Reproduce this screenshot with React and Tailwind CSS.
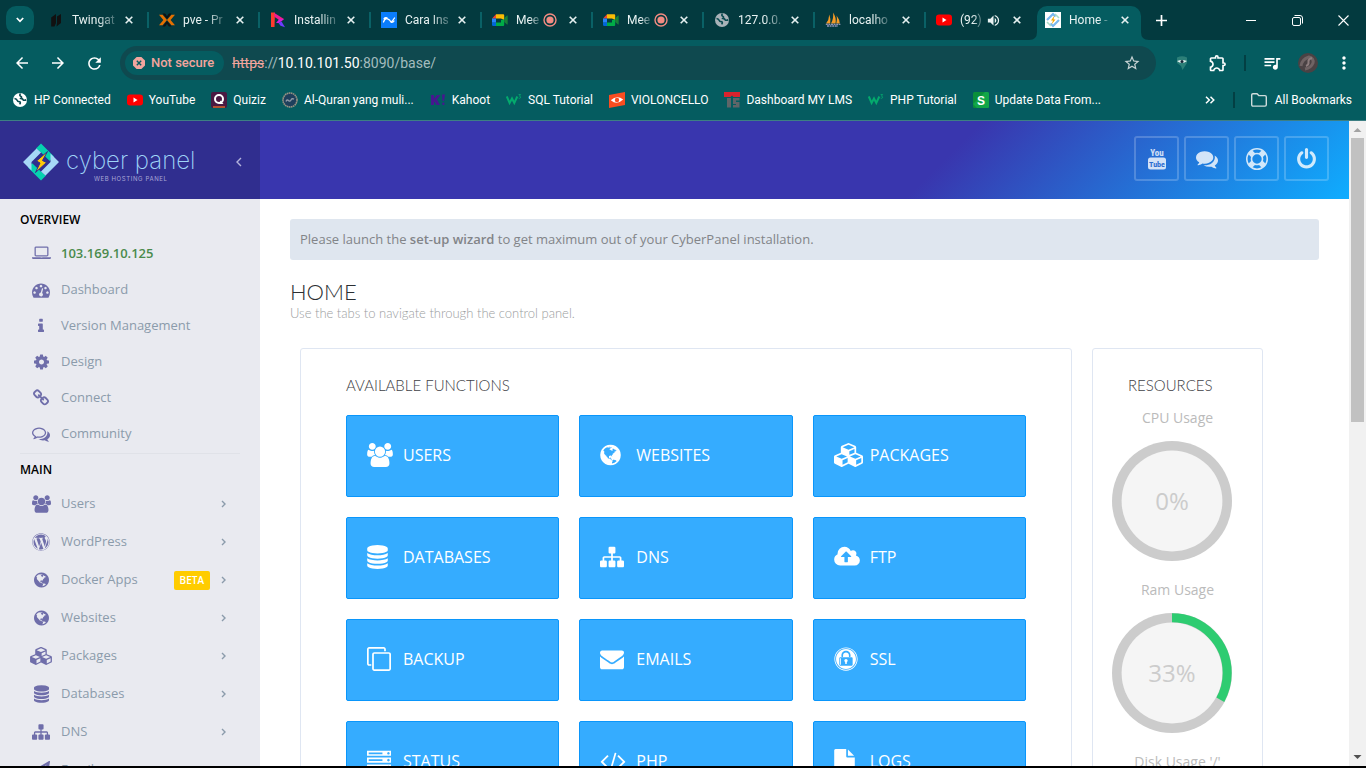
import React from "react";
import { FaWordpress, FaExpeditedssl } from "react-icons/fa";
import { MdQueueMusic, MdOutlineExtension, MdStarBorder, MdRefresh, MdArrowBack, MdArrowForward, MdVolumeUp, MdMoreVert } from "react-icons/md";

/* ---------- icon glyphs: [min-x, width, path] on a 1792-unit em ---------- */
const GLYPHS = {
  users: [-64, 1920, "M529 896q-162 5-265 128h-134q-82 0-138-40.5t-56-118.5q0-353 124-353 6 0 43.5 21t97.5 42.5 119 21.5q67 0 133-23-5 37-5 66 0 139 81 256zm1071 637q0 120-73 189.5t-194 69.5h-874q-121 0-194-69.5t-73-189.5q0-53 3.5-103.5t14-109 26.5-108.5 43-97.5 62-81 85.5-53.5 111.5-20q10 0 43 21.5t73 48 107 48 135 21.5 135-21.5 107-48 73-48 43-21.5q61 0 111.5 20t85.5 53.5 62 81 43 97.5 26.5 108.5 14 109 3.5 103.5zm-1024-1277q0 106-75 181t-181 75-181-75-75-181 75-181 181-75 181 75 75 181zm704 384q0 159-112.5 271.5t-271.5 112.5-271.5-112.5-112.5-271.5 112.5-271.5 271.5-112.5 271.5 112.5 112.5 271.5zm576 225q0 78-56 118.5t-138 40.5h-134q-103-123-265-128 81-117 81-256 0-29-5-66 66 23 133 23 59 0 119-21.5t97.5-42.5 43.5-21q124 0 124 353zm-128-609q0 106-75 181t-181 75-181-75-75-181 75-181 181-75 181 75 75 181z"],
  globe: [128, 1536, "M896 128q209 0 385.5 103t279.5 279.5 103 385.5-103 385.5-279.5 279.5-385.5 103-385.5-103-279.5-279.5-103-385.5 103-385.5 279.5-279.5 385.5-103zm274 521q-2 1-9.5 9.5t-13.5 9.5q2 0 4.5-5t5-11 3.5-7q6-7 22-15 14-6 52-12 34-8 51 11-2-2 9.5-13t14.5-12q3-2 15-4.5t15-7.5l2-22q-12 1-17.5-7t-6.5-21q0 2-6 8 0-7-4.5-8t-11.5 1-9 1q-10-3-15-7.5t-8-16.5-4-15q-2-5-9.5-11t-9.5-10q-1-2-2.5-5.5t-3-6.5-4-5.5-5.5-2.5-7 5-7.5 10-4.5 5q-3-2-6-1.5t-4.5 1-4.5 3-5 3.5q-3 2-8.5 3t-8.5 2q15-5-1-11-10-4-16-3 9-4 7.5-12t-8.5-14h5q-1-4-8.5-8.5t-17.5-8.5-13-6q-8-5-34-9.5t-33-.5q-5 6-4.5 10.5t4 14 3.5 12.5q1 6-5.5 13t-6.5 12q0 7 14 15.5t10 21.5q-3 8-16 16t-16 12q-5 8-1.5 18.5t10.5 16.5q2 2 1.5 4t-3.5 4.5-5.5 4-6.5 3.5l-3 2q-11 5-20.5-6t-13.5-26q-7-25-16-30-23-8-29 1-5-13-41-26-25-9-58-4 6-1 0-15-7-15-19-12 3-6 4-17.5t1-13.5q3-13 12-23 1-1 7-8.5t9.5-13.5.5-6q35 4 50-11 5-5 11.5-17t10.5-17q9-6 14-5.5t14.5 5.5 14.5 5q14 1 15.5-11t-7.5-20q12 1 3-17-4-7-8-9-12-4-27 5-8 4 2 8-1-1-9.5 10.5t-16.5 17.5-16-5q-1-1-5.5-13.5t-9.5-13.5q-8 0-16 15 3-8-11-15t-24-8q19-12-8-27-7-4-20.5-5t-19.5 4q-5 7-5.5 11.5t5 8 10.5 5.5 11.5 4 8.5 3q14 10 8 14-2 1-8.5 3.5t-11.5 4.5-6 4q-3 4 0 14t-2 14q-5-5-9-17.5t-7-16.5q7 9-25 6l-10-1q-4 0-16 2t-20.5 1-13.5-8q-4-8 0-20 1-4 4-2-4-3-11-9.5t-10-8.5q-46 15-94 41 6 1 12-1 5-2 13-6.5t10-5.5q34-14 42-7l5-5q14 16 20 25-7-4-30-1-20 6-22 12 7 12 5 18-4-3-11.5-10t-14.5-11-15-5q-16 0-22 1-146 80-235 222 7 7 12 8 4 1 5 9t2.5 11 11.5-3q9 8 3 19 1-1 44 27 19 17 21 21 3 11-10 18-1-2-9-9t-9-4q-3 5 .5 18.5t10.5 12.5q-7 0-9.5 16t-2.5 35.5-1 23.5l2 1q-3 12 5.5 34.5t21.5 19.5q-13 3 20 43 6 8 8 9 3 2 12 7.5t15 10 10 10.5q4 5 10 22.5t14 23.5q-2 6 9.5 20t10.5 23q-1 0-2.5 1t-2.5 1q3 7 15.5 14t15.5 13q1 3 2 10t3 11 8 2q2-20-24-62-15-25-17-29-3-5-5.5-15.5t-4.5-14.5q2 0 6 1.5t8.5 3.5 7.5 4 2 3q-3 7 2 17.5t12 18.5 17 19 12 13q6 6 14 19.5t0 13.5q9 0 20 10t17 20q5 8 8 26t5 24q2 7 8.5 13.5t12.5 9.5l16 8 13 7q5 2 18.5 10.5t21.5 11.5q10 4 16 4t14.5-2.5 13.5-3.5q15-2 29 15t21 21q36 19 55 11-2 1 .5 7.5t8 15.5 9 14.5 5.5 8.5q5 6 18 15t18 15q6-4 7-9-3 8 7 20t18 10q14-3 14-32-31 15-49-18 0-1-2.5-5.5t-4-8.5-2.5-8.5 0-7.5 5-3q9 0 10-3.5t-2-12.5-4-13q-1-8-11-20t-12-15q-5 9-16 8t-16-9q0 1-1.5 5.5t-1.5 6.5q-13 0-15-1 1-3 2.5-17.5t3.5-22.5q1-4 5.5-12t7.5-14.5 4-12.5-4.5-9.5-17.5-2.5q-19 1-26 20-1 3-3 10.5t-5 11.5-9 7q-7 3-24 2t-24-5q-13-8-22.5-29t-9.5-37q0-10 2.5-26.5t3-25-5.5-24.5q3-2 9-9.5t10-10.5q2-1 4.5-1.5t4.5 0 4-1.5 3-6q-1-1-4-3-3-3-4-3 7 3 28.5-1.5t27.5 1.5q15 11 22-2 0-1-2.5-9.5t-.5-13.5q5 27 29 9 3 3 15.5 5t17.5 5q3 2 7 5.5t5.5 4.5 5-.5 8.5-6.5q10 14 12 24 11 40 19 44 7 3 11 2t4.5-9.5 0-14-1.5-12.5l-1-8v-18l-1-8q-15-3-18.5-12t1.5-18.5 15-18.5q1-1 8-3.5t15.5-6.5 12.5-8q21-19 15-35 7 0 11-9-1 0-5-3t-7.5-5-4.5-2q9-5 2-16 5-3 7.5-11t7.5-10q9 12 21 2 7-8 1-16 5-7 20.5-10.5t18.5-9.5q7 2 8-2t1-12 3-12q4-5 15-9t13-5l17-11q3-4 0-4 18 2 31-11 10-11-6-20 3-6-3-9.5t-15-5.5q3-1 11.5-.5t10.5-1.5q15-10-7-16-17-5-43 12zm-163 877q206-36 351-189-3-3-12.5-4.5t-12.5-3.5q-18-7-24-8 1-7-2.5-13t-8-9-12.5-8-11-7q-2-2-7-6t-7-5.5-7.5-4.5-8.5-2-10 1l-3 1q-3 1-5.5 2.5t-5.5 3-4 3 0 2.5q-21-17-36-22-5-1-11-5.5t-10.5-7-10-1.5-11.5 7q-5 5-6 15t-2 13q-7-5 0-17.5t2-18.5q-3-6-10.5-4.5t-12 4.5-11.5 8.5-9 6.5-8.5 5.5-8.5 7.5q-3 4-6 12t-5 11q-2-4-11.5-6.5t-9.5-5.5q2 10 4 35t5 38q7 31-12 48-27 25-29 40-4 22 12 26 0 7-8 20.5t-7 21.5q0 6 2 16z"],
  laptop: [0, 1920, "M416 1152q-66 0-113-47t-47-113v-704q0-66 47-113t113-47h1088q66 0 113 47t47 113v704q0 66-47 113t-113 47h-1088zm-32-864v704q0 13 9.5 22.5t22.5 9.5h1088q13 0 22.5-9.5t9.5-22.5v-704q0-13-9.5-22.5t-22.5-9.5h-1088q-13 0-22.5 9.5t-9.5 22.5zm1376 928h160v96q0 40-47 68t-113 28h-1600q-66 0-113-28t-47-68v-96h1760zm-720 96q16 0 16-16t-16-16h-160q-16 0-16 16t16 16h160z"],
  dashboard: [0, 1792, "M384 1152q0-53-37.5-90.5t-90.5-37.5-90.5 37.5-37.5 90.5 37.5 90.5 90.5 37.5 90.5-37.5 37.5-90.5zm192-448q0-53-37.5-90.5t-90.5-37.5-90.5 37.5-37.5 90.5 37.5 90.5 90.5 37.5 90.5-37.5 37.5-90.5zm428 481l101-382q6-26-7.5-48.5t-38.5-29.5-48 6.5-30 39.5l-101 382q-60 5-107 43.5t-63 98.5q-20 77 20 146t117 89 146-20 89-117q16-60-6-117t-72-91zm660-33q0-53-37.5-90.5t-90.5-37.5-90.5 37.5-37.5 90.5 37.5 90.5 90.5 37.5 90.5-37.5 37.5-90.5zm-640-640q0-53-37.5-90.5t-90.5-37.5-90.5 37.5-37.5 90.5 37.5 90.5 90.5 37.5 90.5-37.5 37.5-90.5zm448 192q0-53-37.5-90.5t-90.5-37.5-90.5 37.5-37.5 90.5 37.5 90.5 90.5 37.5 90.5-37.5 37.5-90.5zm320 448q0 261-141 483-19 29-54 29h-1402q-35 0-54-29-141-221-141-483 0-182 71-348t191-286 286-191 348-71 348 71 286 191 191 286 71 348z"],
  info: [576, 640, "M1216 1344v128q0 26-19 45t-45 19h-512q-26 0-45-19t-19-45v-128q0-26 19-45t45-19h64v-384h-64q-26 0-45-19t-19-45v-128q0-26 19-45t45-19h384q26 0 45 19t19 45v576h64q26 0 45 19t19 45zm-128-1152v192q0 26-19 45t-45 19h-256q-26 0-45-19t-19-45v-192q0-26 19-45t45-19h256q26 0 45 19t19 45z"],
  cog: [128, 1536, "M1152 896q0-106-75-181t-181-75-181 75-75 181 75 181 181 75 181-75 75-181zm512-109v222q0 12-8 23t-20 13l-185 28q-19 54-39 91 35 50 107 138 10 12 10 25t-9 23q-27 37-99 108t-94 71q-12 0-26-9l-138-108q-44 23-91 38-16 136-29 186-7 28-36 28h-222q-14 0-24.5-8.5t-11.5-21.5l-28-184q-49-16-90-37l-141 107q-10 9-25 9-14 0-25-11-126-114-165-168-7-10-7-23 0-12 8-23 15-21 51-66.5t54-70.5q-27-50-41-99l-183-27q-13-2-21-12.5t-8-23.5v-222q0-12 8-23t19-13l186-28q14-46 39-92-40-57-107-138-10-12-10-24 0-10 9-23 26-36 98.5-107.5t94.5-71.5q13 0 26 10l138 107q44-23 91-38 16-136 29-186 7-28 36-28h222q14 0 24.5 8.5t11.5 21.5l28 184q49 16 90 37l142-107q9-9 24-9 13 0 25 10 129 119 165 170 7 8 7 22 0 12-8 23-15 21-51 66.5t-54 70.5q26 50 41 98l183 28q13 2 21 12.5t8 23.5z"],
  link: [80, 1632, "M1520 1216q0-40-28-68l-208-208q-28-28-68-28-42 0-72 32 3 3 19 18.5t21.5 21.5 15 19 13 25.5 3.5 27.5q0 40-28 68t-68 28q-15 0-27.5-3.5t-25.5-13-19-15-21.5-21.5-18.5-19q-33 31-33 73 0 40 28 68l206 207q27 27 68 27 40 0 68-26l147-146q28-28 28-67zm-703-705q0-40-28-68l-206-207q-28-28-68-28-39 0-68 27l-147 146q-28 28-28 67 0 40 28 68l208 208q27 27 68 27 42 0 72-31-3-3-19-18.5t-21.5-21.5-15-19-13-25.5-3.5-27.5q0-40 28-68t68-28q15 0 27.5 3.5t25.5 13 19 15 21.5 21.5 18.5 19q33-31 33-73zm895 705q0 120-85 203l-147 146q-83 83-203 83-121 0-204-85l-206-207q-83-83-83-203 0-123 88-209l-88-88q-86 88-208 88-120 0-204-84l-208-208q-84-84-84-204t85-203l147-146q83-83 203-83 121 0 204 85l206 207q83 83 83 203 0 123-88 209l88 88q86-88 208-88 120 0 204 84l208 208q84 84 84 204z"],
  commentsO: [0, 1792, "M704 384q-153 0-286 52t-211.5 141-78.5 191q0 82 53 158t149 132l97 56-35 84q34-20 62-39l44-31 53 10q78 14 153 14 153 0 286-52t211.5-141 78.5-191-78.5-191-211.5-141-286-52zm0-128q191 0 353.5 68.5t256.5 186.5 94 257-94 257-256.5 186.5-353.5 68.5q-86 0-176-16-124 88-278 128-36 9-86 16h-3q-11 0-20.5-8t-11.5-21q-1-3-1-6.5t.5-6.5 2-6l2.5-5 3.5-5.5 4-5 4.5-5 4-4.5q5-6 23-25t26-29.5 22.5-29 25-38.5 20.5-44q-124-72-195-177t-71-224q0-139 94-257t256.5-186.5 353.5-68.5zm822 1169q10 24 20.5 44t25 38.5 22.5 29 26 29.5 23 25q1 1 4 4.5t4.5 5 4 5 3.5 5.5l2.5 5 2 6 .5 6.5-1 6.5q-3 14-13 22t-22 7q-50-7-86-16-154-40-278-128-90 16-176 16-271 0-472-132 58 4 88 4 161 0 309-45t264-129q125-92 192-212t67-254q0-77-23-152 129 71 204 178t75 230q0 120-71 224.5t-195 176.5z"],
  comments: [0, 1792, "M1408 768q0 139-94 257t-256.5 186.5-353.5 68.5q-86 0-176-16-124 88-278 128-36 9-86 16h-3q-11 0-20.5-8t-11.5-21q-1-3-1-6.5t.5-6.5 2-6l2.5-5 3.5-5.5 4-5 4.5-5 4-4.5q5-6 23-25t26-29.5 22.5-29 25-38.5 20.5-44q-124-72-195-177t-71-224q0-139 94-257t256.5-186.5 353.5-68.5 353.5 68.5 256.5 186.5 94 257zm384 256q0 120-71 224.5t-195 176.5q10 24 20.5 44t25 38.5 22.5 29 26 29.5 23 25q1 1 4 4.5t4.5 5 4 5 3.5 5.5l2.5 5 2 6 .5 6.5-1 6.5q-3 14-13 22t-22 7q-50-7-86-16-154-40-278-128-90 16-176 16-271 0-472-132 58 4 88 4 161 0 309-45t264-129q125-92 192-212t67-254q0-77-23-152 129 71 204 178t75 230z"],
  ring: [0, 1792, "M896 0q182 0 348 71t286 191 191 286 71 348-71 348-191 286-286 191-348 71-348-71-286-191-191-286-71-348 71-348 191-286 286-191 348-71zm0 128q-190 0-361 90l194 194q82-28 167-28t167 28l194-194q-171-90-361-90zm-678 1129l194-194q-28-82-28-167t28-167l-194-194q-90 171-90 361t90 361zm678 407q190 0 361-90l-194-194q-82 28-167 28t-167-28l-194 194q171 90 361 90zm0-384q159 0 271.5-112.5t112.5-271.5-112.5-271.5-271.5-112.5-271.5 112.5-112.5 271.5 112.5 271.5 271.5 112.5zm484-217l194 194q90-171 90-361t-90-361l-194 194q28 82 28 167t-28 167z"],
  power: [128, 1536, "M1664 896q0 156-61 298t-164 245-245 164-298 61-298-61-245-164-164-245-61-298q0-182 80.5-343t226.5-270q43-32 95.5-25t83.5 50q32 42 24.5 94.5t-49.5 84.5q-98 74-151.5 181t-53.5 228q0 104 40.5 198.5t109.5 163.5 163.5 109.5 198.5 40.5 198.5-40.5 163.5-109.5 109.5-163.5 40.5-198.5q0-121-53.5-228t-151.5-181q-42-32-49.5-84.5t24.5-94.5q31-43 84-50t95 25q146 109 226.5 270t80.5 343zm-640-768v640q0 52-38 90t-90 38-90-38-38-90v-640q0-52 38-90t90-38 90 38 38 90z"],
  cubes: [0, 2176, "M640 1632l384-192v-314l-384 164v342zm-64-454l404-173-404-173-404 173zm1088 454l384-192v-314l-384 164v342zm-64-454l404-173-404-173-404 173zm-448-293l384-165v-266l-384 164v267zm-64-379l441-189-441-189-441 189zm1088 518v416q0 36-19 67t-52 47l-448 224q-25 14-57 14t-57-14l-448-224q-4-2-7-4-2 2-7 4l-448 224q-25 14-57 14t-57-14l-448-224q-33-16-52-47t-19-67v-416q0-38 21.5-70t56.5-48l434-186v-400q0-38 21.5-70t56.5-48l448-192q23-10 50-10t50 10l448 192q35 16 56.5 48t21.5 70v400l434 186q36 16 57 48t21 70z"],
  database: [128, 1536, "M896 768q237 0 443-43t325-127v170q0 69-103 128t-280 93.5-385 34.5-385-34.5-280-93.5-103-128v-170q119 84 325 127t443 43zm0 768q237 0 443-43t325-127v170q0 69-103 128t-280 93.5-385 34.5-385-34.5-280-93.5-103-128v-170q119 84 325 127t443 43zm0-384q237 0 443-43t325-127v170q0 69-103 128t-280 93.5-385 34.5-385-34.5-280-93.5-103-128v-170q119 84 325 127t443 43zm0-1152q208 0 385 34.5t280 93.5 103 128v128q0 69-103 128t-280 93.5-385 34.5-385-34.5-280-93.5-103-128v-128q0-69 103-128t280-93.5 385-34.5z"],
  sitemap: [0, 1792, "M1792 1248v320q0 40-28 68t-68 28h-320q-40 0-68-28t-28-68v-320q0-40 28-68t68-28h96v-192h-512v192h96q40 0 68 28t28 68v320q0 40-28 68t-68 28h-320q-40 0-68-28t-28-68v-320q0-40 28-68t68-28h96v-192h-512v192h96q40 0 68 28t28 68v320q0 40-28 68t-68 28h-320q-40 0-68-28t-28-68v-320q0-40 28-68t68-28h96v-192q0-52 38-90t90-38h512v-192h-96q-40 0-68-28t-28-68v-320q0-40 28-68t68-28h320q40 0 68 28t28 68v320q0 40-28 68t-68 28h-96v192h512q52 0 90 38t38 90v192h96q40 0 68 28t28 68z"],
  upload: [-64, 1920, "M1216 864q0-14-9-23l-352-352q-9-9-23-9t-23 9l-351 351q-10 12-10 24 0 14 9 23t23 9h224v352q0 13 9.5 22.5t22.5 9.5h192q13 0 22.5-9.5t9.5-22.5v-352h224q13 0 22.5-9.5t9.5-22.5zm640 288q0 159-112.5 271.5t-271.5 112.5h-1088q-185 0-316.5-131.5t-131.5-316.5q0-130 70-240t188-165q-2-30-2-43 0-212 150-362t362-150q156 0 285.5 87t188.5 231q71-62 166-62 106 0 181 75t75 181q0 76-41 138 130 31 213.5 135.5t83.5 238.5z"],
  clone: [0, 1792, "M1664 1632v-1088q0-13-9.5-22.5t-22.5-9.5h-1088q-13 0-22.5 9.5t-9.5 22.5v1088q0 13 9.5 22.5t22.5 9.5h1088q13 0 22.5-9.5t9.5-22.5zm128-1088v1088q0 66-47 113t-113 47h-1088q-66 0-113-47t-47-113v-1088q0-66 47-113t113-47h1088q66 0 113 47t47 113zm-384-384v160h-128v-160q0-13-9.5-22.5t-22.5-9.5h-1088q-13 0-22.5 9.5t-9.5 22.5v1088q0 13 9.5 22.5t22.5 9.5h160v128h-160q-66 0-113-47t-47-113v-1088q0-66 47-113t113-47h1088q66 0 113 47t47 113z"],
  envelope: [0, 1792, "M1792 710v794q0 66-47 113t-113 47h-1472q-66 0-113-47t-47-113v-794q44 49 101 87 362 246 497 345 57 42 92.5 65.5t94.5 48 110 24.5h2q51 0 110-24.5t94.5-48 92.5-65.5q170-123 498-345 57-39 100-87zm0-294q0 79-49 151t-122 123q-376 261-468 325-10 7-42.5 30.5t-54 38-52 32.5-57.5 27-50 9h-2q-23 0-50-9t-57.5-27-52-32.5-54-38-42.5-30.5q-91-64-262-182.5t-205-142.5q-62-42-117-115.5t-55-136.5q0-78 41.5-130t118.5-52h1472q65 0 112.5 47t47.5 113z"],
  server: [0, 1792, "M128 1408h1024v-128h-1024v128zm0-512h1024v-128h-1024v128zm1568 448q0-40-28-68t-68-28-68 28-28 68 28 68 68 28 68-28 28-68zm-1568-960h1024v-128h-1024v128zm1568 448q0-40-28-68t-68-28-68 28-28 68 28 68 68 28 68-28 28-68zm0-512q0-40-28-68t-68-28-68 28-28 68 28 68 68 28 68-28 28-68zm96 832v384h-1792v-384h1792zm0-512v384h-1792v-384h1792zm0-512v384h-1792v-384h1792z"],
  code: [64, 1920, "M681 1399l-50 50q-10 10-23 10t-23-10l-466-466q-10-10-10-23t10-23l466-466q10-10 23-10t23 10l50 50q10 10 10 23t-10 23l-393 393 393 393q10 10 10 23t-10 23zm591-1067l-373 1291q-4 13-15.5 19.5t-23.5 2.5l-62-17q-13-4-19.5-15.5t-2.5-24.5l373-1291q4-13 15.5-19.5t23.5-2.5l62 17q13 4 19.5 15.5t2.5 24.5zm657 651l-466 466q-10 10-23 10t-23-10l-50-50q-10-10-10-23t10-23l393-393-393-393q-10-10-10-23t10-23l50-50q10-10 23-10t23 10l466 466q10 10 10 23t-10 23z"],
  file: [128, 1536, "M1152 512v-472q22 14 36 28l408 408q14 14 28 36h-472zm-128 32q0 40 28 68t68 28h544v1056q0 40-28 68t-68 28h-1344q-40 0-68-28t-28-68v-1600q0-40 28-68t68-28h800v544z"],
  plane: [0, 1792, "M1764 11q33 24 27 64l-256 1536q-5 29-32 45-14 8-31 8-11 0-24-5l-453-185-242 295q-18 23-49 23-13 0-22-4-19-7-30.5-23.5t-11.5-36.5v-349l864-1059-1069 925-395-162q-37-14-40-55-2-40 32-59l1664-960q15-9 32-9 20 0 36 11z"],
};

function Glyph({ name, size }) {
  if (name === "wordpress") return <FaWordpress size={size} aria-hidden="true" />;
  if (name === "ssl") return <FaExpeditedssl size={size} aria-hidden="true" />;
  const [x, w, d] = GLYPHS[name];
  return (
    <svg aria-hidden="true" width={Math.round((w * size) / 1792)} height={size} viewBox={`${x} 0 ${w} 1792`} fill="currentColor">
      <path d={d} />
    </svg>
  );
}

function Chevron({ flip }) {
  return (
    <svg aria-hidden="true" width="8" height="10" viewBox="0 0 8 10" fill="none" stroke="currentColor" strokeWidth="1.4">
      <path d={flip ? "M6 1 2 5l4 4" : "M2 2l3 3-3 3"} />
    </svg>
  );
}

/* ---------- favicons ---------- */
const S = ({ children }) => (
  <svg aria-hidden="true" className="size-4 shrink-0" viewBox="0 0 16 16">{children}</svg>
);
const YouTubeIcon = () => (
  <S><rect y="2.5" width="16" height="11" rx="3" fill="#f00" /><path d="M6.5 5.6v4.8l4-2.4z" fill="#fff" /></S>
);
const MeetIcon = () => (
  <S>
    <path d="M0 6.5 4 2.3v4.2z" fill="#ea4335" />
    <path d="M4 2.3h7.2q1 0 1 1V8L9 6.5H4z" fill="#fbbc04" />
    <path d="M0 6.5h4v4.2H0z" fill="#2684fc" />
    <path d="M0 10.7h4v3.2H1.2Q0 13.9 0 12.7z" fill="#0066da" />
    <path d="M4 10.5h5V8l3.2-.5v5.2q0 1.200-1 1.200H4z" fill="#00ac47" />
    <path d="M12.2 6 15 3.600q.7-.4.700.4v8q0 .9-.7.400L12.200 10z" fill="#188038" />
  </S>
);
const W3Icon = () => (
  <S>
    <path d="M.8 4.500 3.600 11 6 6.500 8.300 11l3-6.500" fill="none" stroke="#04aa6d" strokeWidth="2" />
    <path d="M12.600 2.500h2l-1.200 1.700q1.600.2 1.200 1.500-.6 1-2 .4" fill="none" stroke="#04aa6d" strokeWidth=".8" />
  </S>
);
const EarthIcon = ({ fill }) => (
  <S>
    <circle cx="8" cy="8" r="7" fill={fill} />
    <path d="M2.500 6.500q2 .2 2.600 1.800t2.600 1.400q1.400 1-.2 2.600M8.500 1.500Q7 3.500 8.700 4.200t.2 2.200q2 .4 2.400 1.700 1.600.4 3-.3" fill="none" stroke="#0a4a50" strokeWidth="1.600" />
  </S>
);
const ICONS = {
  twingate: <S><path d="M3.200 5.500 8 2v9l-1.500 3.500H3.200zM9 4.500 13 2v9L8.500 14.500 9 11z" fill="#111" /></S>,
  pve: (
    <S>
      <path d="M0 2.800h3.600L8 8l-4.400 5.200H0L4.400 8zM16 2.800h-3.600L8 8l4.400 5.200H16L11.600 8z" fill="#e57000" />
      <path d="M3.500 1.600h2.600L8 4.200l1.900-2.600h2.600L8 7zM3.500 14.400h2.600L8 11.800l1.900 2.600h2.600L8 9z" fill="#111" />
    </S>
  ),
  play: (
    <S>
      <path d="M1 .5h4L4.500 15H1z" fill="#ff3a2e" />
      <path d="M4 .8l10 6.200-3 2.500L7 6.500 4.500 5z" fill="#f01c8f" />
      <path d="M14 7l-5 4H6l3-3.500z" fill="#d81be0" />
      <path d="M8.500 11l3-1.500L15 15.200l-4.500-1.500z" fill="#6d3cff" />
    </S>
  ),
  cara: (
    <S>
      <rect width="16" height="16" fill="#0b7dfb" />
      <path d="M2.500 10q1.500-4 4-3.200T9.500 9.400 13.500 6M3 6.800q1-1.600 3-1M13 9q-1 1.800-3 1.200" fill="none" stroke="#fff" strokeWidth="1.300" strokeLinecap="round" />
    </S>
  ),
  meet: <MeetIcon />,
  earth: <EarthIcon fill="#a9b2b8" />,
  pma: (
    <S>
      <path d="M1 11.500Q4 8 4.300 2.500 6 7 5.200 11.500zM6 11.500Q9 6 8 .5q3.600 5 2.500 11zM11.300 11.500Q12.500 7 11.600 3.500q3 4 3.200 8z" fill="#f39a26" />
      <path d="M.8 12.300h14.600M2 14h11" stroke="#8f93b8" strokeWidth="1.300" strokeDasharray="2 .6" />
    </S>
  ),
  yt: <YouTubeIcon />,
  cyber: (
    <S>
      <rect width="16" height="16" fill="#fff" />
      <path d="M2 8l6-6 2.500 2.500M14 8l-6 6-2.500-2.500" fill="none" stroke="#79b8f0" strokeWidth="2.200" />
      <path d="M10 2l4 4M2 10l4 4" stroke="#a9dcc8" strokeWidth="1.600" />
      <path d="M9.500 3.500 6 8.500h2l-1.500 4L10.500 7.500h-2z" fill="#f6a800" />
    </S>
  ),
  hp: <EarthIcon fill="#fff" />,
  quiziz: (
    <S>
      <rect width="16" height="16" rx="2" fill="#4b1942" />
      <path d="M2 15h12" stroke="#d8642c" strokeWidth="1.500" />
      <circle cx="8" cy="7" r="4" fill="none" stroke="#fff" strokeWidth="2" />
      <path d="M9.500 8.500 12.500 12H8" fill="#fff" />
    </S>
  ),
  quran: (
    <S>
      <circle cx="8" cy="8" r="7" fill="#1e3f5c" stroke="#9a9384" strokeWidth="1.600" strokeDasharray="1.600 .5" />
      <path d="M4 9.500q1-2.500 2.500-1T9 8t3-.8" fill="none" stroke="#8f9aa5" strokeWidth="1.400" />
    </S>
  ),
  kahoot: <S><path d="M1 3h3v3.500L7 3h3.500L7 7.500 10 13H6.500L4.600 9.800 4 10.500V13H1zM12 2.500h3l-1 6.500h-1.400zM12.400 10.500h2V13h-2z" fill="#46178f" /></S>,
  w3: <W3Icon />,
  violon: (
    <S>
      <path d="M0 3 16 0v13L0 16z" fill="#fb4d20" />
      <path d="M1.800 8.200Q8 2.500 14.200 7.600 8 13.500 1.800 8.200z" fill="#fff" />
      <circle cx="8" cy="8" r="2.200" fill="#fb4d20" />
    </S>
  ),
  lms: (
    <S>
      <path d="M0 0h16v5H9.500L8 3.500 6.500 5H0z" fill="#d9232e" />
      <path d="M3 6h4v9.500H3zM9 6h6.500v2.500H12V10h3.500v5.500H9V13h3v-1H9z" fill="#5f6568" />
    </S>
  ),
  sheet: (
    <S>
      <rect width="16" height="16" rx="1.500" fill="#0b8f3a" />
      <path d="M0 12 12 0h2.500Q16 0 16 1.500v13q0 1.500-1.500 1.500H4z" fill="#12a648" />
      <text x="8" y="12.500" textAnchor="middle" fontFamily="Liberation Sans, sans-serif" fontWeight="700" fontSize="12" fill="#fff">S</text>
    </S>
  ),
};

const CloseX = () => (
  <svg aria-hidden="true" width="8" height="8" viewBox="0 0 8 8" stroke="#e6f1f1" strokeWidth="1.600"><path d="M.7.700l6.600 6.600M7.300.700.7 7.300" /></svg>
);
const RecIcon = () => (
  <svg aria-hidden="true" className="size-[14px] shrink-0" viewBox="0 0 14 14"><circle cx="7" cy="7" r="6" fill="none" stroke="#f28b82" strokeWidth="1.400" /><circle cx="7" cy="7" r="3.600" fill="#f28b82" /></svg>
);

const TABS = [
  { icon: "twingate", title: "Twingat" },
  { icon: "pve", title: "pve - Pr" },
  { icon: "play", title: "Installin" },
  { icon: "cara", title: "Cara Ins" },
  { icon: "meet", title: "Mee", badge: "rec" },
  { icon: "meet", title: "Mee", badge: "rec" },
  { icon: "earth", title: "127.0.0." },
  { icon: "pma", title: "localho" },
  { icon: "yt", title: "(92)", badge: "audio" },
];

function TabStrip() {
  return (
    <div className="flex h-10 items-center bg-[#033a3f] text-[12px] text-[#e8f2f2]">
      <button aria-label="Search tabs" className="ml-[6px] mr-1 flex size-7 shrink-0 items-center justify-center rounded-[10px] bg-[#055c60]">
        <svg aria-hidden="true" width="8" height="6" viewBox="0 0 8 6" fill="none" stroke="#fff" strokeWidth="1.700"><path d="M.8 1 4 4.300 7.200 1" /></svg>
      </button>
      {TABS.map((t, i) => (
        <div key={i} className="flex h-10 w-[111px] shrink-0 items-center">
          <div className="flex min-w-0 flex-1 items-center pl-[10px]">
            {ICONS[t.icon]}
            <span className="ml-2 shrink-0 whitespace-nowrap [mask-image:linear-gradient(to_right,#000_60%,#0004)]">{t.title}</span>
            {t.badge === "rec" && <span className="ml-auto"><RecIcon /></span>}
            {t.badge === "audio" && <MdVolumeUp className="ml-auto shrink-0" size={15} />}
          </div>
          <button aria-label="Close tab" className={(t.badge ? "ml-2" : "ml-0") + " mr-[10px] flex size-4 shrink-0 items-center justify-center"}><CloseX /></button>
          <span className={i < 8 ? "h-4 w-[2px] bg-[#0a6166]" : "h-4 w-[2px]"} />
        </div>
      ))}
      <div className="relative mt-[6px] flex h-[34px] w-[104px] shrink-0 items-center rounded-t-[10px] bg-[#055c60] px-2 pb-[6px]">
        <svg aria-hidden="true" className="absolute -left-2 bottom-0 size-2" viewBox="0 0 8 8"><path d="M8 0v8H0q8 0 8-8z" fill="#055c60" /></svg>
        <svg aria-hidden="true" className="absolute -right-2 bottom-0 size-2" viewBox="0 0 8 8"><path d="M0 0v8h8Q0 8 0 0z" fill="#055c60" /></svg>
        {ICONS.cyber}
        <span className="ml-2 shrink-0 whitespace-nowrap [mask-image:linear-gradient(to_right,#000_75%,#0004)]">Home -</span>
        <button aria-label="Close tab" className="ml-auto flex size-4 shrink-0 items-center justify-center"><CloseX /></button>
      </div>
      <button aria-label="New tab" className="ml-[10px] flex size-5 items-center justify-center">
        <svg aria-hidden="true" width="11" height="11" viewBox="0 0 11 11" stroke="#fff" strokeWidth="1.700"><path d="M5.500 0v11M0 5.500h11" /></svg>
      </button>
      <div className="ml-auto flex h-full">
        <button aria-label="Minimize" className="flex w-[46px] items-center justify-center"><svg aria-hidden="true" width="10" height="10" viewBox="0 0 10 10" stroke="#fff"><path d="M0 5.500h10" /></svg></button>
        <button aria-label="Restore" className="flex w-[46px] items-center justify-center"><svg aria-hidden="true" width="11" height="11" viewBox="0 0 11 11" fill="none" stroke="#fff"><rect x=".5" y="2.500" width="8" height="8" rx="1.500" /><path d="M2.500.5h5.500q2.500 0 2.500 2.500v5.500" /></svg></button>
        <button aria-label="Close window" className="flex w-[46px] items-center justify-center"><svg aria-hidden="true" width="11" height="11" viewBox="0 0 11 11" stroke="#fff" strokeWidth="1.100"><path d="M.5.500l10 10M10.500.5l-10 10" /></svg></button>
      </div>
    </div>
  );
}

const BOX = "flex size-[26px] shrink-0 items-center justify-center";
function Toolbar() {
  return (
    <div className="flex h-[46px] items-center bg-[#055c60] pl-[9px] pr-[9px] text-white">
      <button aria-label="Back" className={BOX}><MdArrowBack size={18} /></button>
      <button aria-label="Forward" className={BOX + " ml-[10px]"}><MdArrowForward size={18} /></button>
      <button aria-label="Reload" className={BOX + " ml-[10px]"}><MdRefresh size={19} /></button>
      <div className="ml-[13px] flex h-[34px] min-w-0 flex-1 items-center rounded-full bg-[#0f494f] px-[5px]">
        <button className="flex h-6 shrink-0 items-center gap-[6px] rounded-full bg-[#055c60] pl-2 pr-[10px] text-[13px] font-medium text-[#f2a59e]">
          <svg aria-hidden="true" width="12" height="12" viewBox="0 0 12 12"><path d="M3.600 0h4.800L12 3.600v4.800L8.400 12H3.600L0 8.400V3.600z" fill="#f2a59e" /><path d="M3.800 3.800l4.400 4.400M8.200 3.800 3.800 8.200" stroke="#055c60" strokeWidth="1.400" /></svg>
          Not secure
        </button>
        <div className="ml-2 flex-1 truncate text-[14px] text-[#a3bcbe]"><span className="text-[#f2a59e] line-through">https</span>://<span className="text-white">10.10.101.50</span>:8090/base/</div>
        <button aria-label="Bookmark this tab" className="mr-[10px] text-[#c7d3d4]"><MdStarBorder size={18} /></button>
      </div>
      <button aria-label="Extension" className={BOX + " ml-[13px]"}>
        <svg aria-hidden="true" width="16" height="16" viewBox="0 0 16 16"><path d="M3 2.500Q8 0 13 2.500v5.500L8.500 15 7 11 3 8z" fill="#2c7f78" /><path d="M3 6q5 4 10 0-5-2-10 0z" fill="#e6f4f2" /><circle cx="8" cy="6.500" r="1.500" fill="#123" /></svg>
      </button>
      <button aria-label="Extensions" className={BOX + " ml-[10px]"}><MdOutlineExtension size={20} /></button>
      <span className="ml-[13px] h-4 w-[2px] bg-[#033f43]" />
      <button aria-label="Media" className={BOX + " ml-[13px]"}><MdQueueMusic size={20} /></button>
      <button aria-label="Profile" className={BOX + " ml-[10px]"}>
        <svg aria-hidden="true" width="20" height="20" viewBox="0 0 20 20"><circle cx="10" cy="10" r="10" fill="#4a4244" /><path d="M3 13q1-7 8-9 5 1 4 6-2 5-8 6" fill="none" stroke="#6f6364" strokeWidth="3" /><path d="M8 13q3-1 2.500-4T14 5" fill="none" stroke="#8d7d7e" strokeWidth="2" /></svg>
      </button>
      <button aria-label="Menu" className={BOX + " ml-[10px]"}><MdMoreVert size={20} /></button>
    </div>
  );
}

const MARKS = [
  ["hp", "HP Connected"], ["yt", "YouTube"], ["quiziz", "Quiziz"], ["quran", "Al-Quran yang muli..."], ["kahoot", "Kahoot"],
  ["w3", "SQL Tutorial"], ["violon", "VIOLONCELLO"], ["lms", "Dashboard MY LMS"], ["w3", "PHP Tutorial"], ["sheet", "Update Data From..."],
];
function Bookmarks() {
  return (
    <nav aria-label="Bookmarks" className="flex h-[35px] items-center border-b border-[#3d7f83] bg-[#055c60] pb-[7px] pl-3 pr-[14px] text-[12px] text-white">
      <div className="flex items-center gap-4">
        {MARKS.map(([icon, label]) => (
          <a key={label} href="#" className="flex items-center gap-[6px] whitespace-nowrap">{ICONS[icon]}{label}</a>
        ))}
      </div>
      <button aria-label="More bookmarks" className="ml-auto">
        <svg aria-hidden="true" width="10" height="8" viewBox="0 0 10 8" fill="none" stroke="#fff" strokeWidth="1.500"><path d="M1 .7 4.300 4 1 7.300M5.500.700 8.800 4 5.500 7.300" /></svg>
      </button>
      <span className="ml-[18px] h-4 w-[2px] bg-[#033f43]" />
      <a href="#" className="ml-4 flex items-center gap-2 whitespace-nowrap">
        <svg aria-hidden="true" width="16" height="14" viewBox="0 0 16 14" fill="none" stroke="#cfdcdc" strokeWidth="1.400"><path d="M.7 11.800V2q0-1.300 1.300-1.300h4l1.800 1.900H14q1.300 0 1.300 1.300v7.900q0 1.300-1.300 1.300H2q-1.300 0-1.300-1.300z" /></svg>
        All Bookmarks
      </a>
    </nav>
  );
}

/* ---------- page ---------- */
const OVERVIEW = [["laptop", "103.169.10.125"], ["dashboard", "Dashboard"], ["info", "Version Management"], ["cog", "Design"], ["link", "Connect"], ["commentsO", "Community"]];
const MAIN = [["users", "Users"], ["wordpress", "WordPress"], ["globe", "Docker Apps", "BETA"], ["globe", "Websites"], ["cubes", "Packages"], ["database", "Databases"], ["sitemap", "DNS"], ["plane", "Email"]];

function LogoMark() {
  return (
    <svg aria-hidden="true" width="36" height="38" viewBox="0 0 36 38">
      <path d="M18 .5 31 13.500l-4.500 4.500L18 9.500l-5-4z" fill="#06d1b0" />
      <path d="M18 37.500 5 24.500 9.500 20l8.500 8.500 5 4z" fill="#06d1b0" />
      <path d="M9 15.500 18 9.500l8.500 8.500.5 5-9 5.500L9 20z" fill="#302e8f" />
      <path d="M0 19 13.500 5.500l4.500 4-9.500 9.500v8.500z" fill="#a6d8f7" />
      <path d="M36 19 22.500 32.500l-4.500-4 9.500-9.500v-8.500z" fill="#a6d8f7" />
      <path d="M24.500 8.500 13.500 18l3.500 2-4.500 9.500L23.500 19.500 19.500 17.500z" fill="#ffc907" stroke="#302e8c" strokeWidth="1" />
    </svg>
  );
}

function Sidebar() {
  return (
    <aside className="flex w-[260px] shrink-0 flex-col bg-[#e9eaf0]">
      <div className="flex h-[78px] shrink-0 items-center bg-[#302e8f] pl-[23px] pr-[17px] pt-[3px]">
        <LogoMark />
        <div className="ml-[7px] flex flex-col items-center pt-[6px] font-['Inter',sans-serif]">
          <span className="whitespace-nowrap text-[24px] font-extralight leading-7 text-[#9fd4f7]">cyber panel</span>
          <span className="whitespace-nowrap text-[6px] leading-[8px] tracking-widest text-[#a9a7d6]">WEB HOSTING PANEL</span>
        </div>
        <button aria-label="Collapse sidebar" className="ml-auto text-[#b3b2dc]"><Chevron flip /></button>
      </div>
      <nav className="px-5 pt-[11px] text-[13px] text-[#8b9bab]">
        <h2 className="text-[12px] font-semibold leading-5 text-black">OVERVIEW</h2>
        <ul className="mt-[6px]">
          {OVERVIEW.map(([icon, label], i) => (
            <li key={label}>
              <a href="#" className="flex h-9 items-center pl-2">
                <span className="flex w-[26px] shrink-0 justify-center text-[#6f6eaa]"><Glyph name={icon} size={18} /></span>
                <span className={i === 0 ? "ml-[7px] font-semibold text-[#4a8a4c]" : "ml-[7px]"}>{label}</span>
              </a>
            </li>
          ))}
        </ul>
        <hr className="mt-px border-[#e0e2e8]" />
        <h2 className="mt-[6px] text-[12px] font-semibold leading-5 text-black">MAIN</h2>
        <ul className="mt-[5px]">
          {MAIN.map(([icon, label, tag]) => (
            <li key={label}>
              <a href="#" className="flex h-[38px] items-center pl-2 pr-3">
                <span className="flex w-[26px] shrink-0 justify-center text-[#6f6eaa]"><Glyph name={icon} size={18} /></span>
                <span className="ml-[7px] flex-1">{label}</span>
                {tag && <span className="mr-[10px] rounded-[2px] bg-[#fc0] px-[6px] text-[10px] font-semibold leading-[19px] text-white">{tag}</span>}
                <Chevron />
              </a>
            </li>
          ))}
        </ul>
      </nav>
    </aside>
  );
}

function YouTubeMark() {
  return (
    <svg aria-hidden="true" width="18" height="22" viewBox="0 0 18 22" fontFamily="Liberation Sans Narrow, Roboto Condensed, Liberation Sans, sans-serif" fontWeight="700" textAnchor="middle">
      <text x="9" y="8" fontSize="9" fill="currentColor">You</text>
      <rect y="9.500" width="18" height="12" rx="2.500" fill="currentColor" />
      <text x="9" y="18.500" fontSize="8" fill="#2a6cd0">Tube</text>
    </svg>
  );
}

const HEADER_ACTIONS = [["Videos", null], ["Support chat", "comments"], ["Help", "ring"], ["Log out", "power"]];
const FUNCTIONS = [
  ["users", "USERS"], ["globe", "WEBSITES"], ["cubes", "PACKAGES"],
  ["database", "DATABASES"], ["sitemap", "DNS"], ["upload", "FTP"],
  ["clone", "BACKUP"], ["envelope", "EMAILS"], ["ssl", "SSL"],
  ["server", "STATUS"], ["code", "PHP"], ["file", "LOGS"],
];

function Gauge({ value }) {
  const r = 55.2;
  const c = 2 * Math.PI * r;
  return (
    <svg role="img" aria-label={`${value}%`} className="block size-[120px]" viewBox="0 0 120 120">
      <circle cx="60" cy="60" r="60" fill="#ccc" />
      <circle cx="60" cy="60" r="50.400" fill="#f5f5f5" />
      {value > 0 && <circle cx="60" cy="60" r={r} fill="none" stroke="#2ecc71" strokeWidth="9" strokeDasharray={`${(c * value) / 100} ${c}`} transform="rotate(-90 60 60)" />}
      <text x="60" y="69" textAnchor="middle" fontSize="24" fill="#ccc">{value}%</text>
    </svg>
  );
}

function Resource({ label, value }) {
  return (
    <div>
      <p className="text-center text-[14px] leading-5 text-[#bbb]">{label}</p>
      <div className="mb-[19px] ml-[19px] mt-[13px]"><Gauge value={value} /></div>
    </div>
  );
}

function Page() {
  return (
    <main className="flex min-w-0 flex-1 flex-col bg-white">
      <header className="flex h-[78px] shrink-0 items-start justify-end gap-[5px] bg-[linear-gradient(135deg,#3936ae_62%,#0fadff_100%)] px-5 pt-[15px]">
        {HEADER_ACTIONS.map(([label, icon]) => (
          <button key={label} aria-label={label} className="flex size-[45px] items-center justify-center rounded-[3px] border-2 border-white/20 text-white/80">
            {icon ? <Glyph name={icon} size={22} /> : <YouTubeMark />}
          </button>
        ))}
      </header>
      <div className="px-[30px] pt-5">
        <div className="rounded-[3px] bg-[#dfe6ef] px-[10px] py-[10px] text-[13px] leading-[21px] text-[#828488]">
          Please launch the <a href="#" className="font-semibold">set-up wizard</a> to get maximum out of your CyberPanel installation.
        </div>
        <h1 className="mt-[18px] font-['Lato',sans-serif] text-[22px] font-light leading-7 text-[#2b2f33]">HOME</h1>
        <p className="font-['Lato',sans-serif] text-[13px] font-light leading-[14px] text-[#9a9da0]">Use the tabs to navigate through the control panel.</p>
        <div className="ml-[10px] mr-14 mt-7 flex items-start gap-5">
          <section className="min-w-0 flex-1 rounded-[3px] border border-[#dfe6f2] px-[45px] pb-10 pt-[26px]">
            <h2 className="font-['Lato',sans-serif] text-[15px] font-light leading-5 text-[#3e4146]">AVAILABLE FUNCTIONS</h2>
            <div className="mt-5 grid grid-cols-3 gap-5">
              {FUNCTIONS.map(([icon, label]) => (
                <a key={label} href="#" className="flex h-[82px] items-center rounded-[2px] border border-[#0a96fb] bg-[#35acff] pb-[2px] pl-5 text-[16px] text-white">
                  <span className="w-9 shrink-0"><Glyph name={icon} size={24} /></span>
                  {label}
                </a>
              ))}
            </div>
          </section>
          <section className="w-[171px] shrink-0 rounded-[3px] border border-[#dfe6f2] pb-10 pt-[26px]">
            <h2 className="pl-[35px] font-['Lato',sans-serif] text-[15px] font-light leading-5 text-[#3e4146]">RESOURCES</h2>
            <div className="mt-[13px]">
              <Resource label="CPU Usage" value={0} />
              <Resource label="Ram Usage" value={33} />
              <Resource label="Disk Usage '/'" value={24} />
            </div>
          </section>
        </div>
      </div>
    </main>
  );
}

function ScrollRail() {
  return (
    <div aria-hidden="true" className="flex w-[17px] shrink-0 flex-col items-center bg-[#f1f1f1]">
      <svg className="h-[17px] w-[9px] shrink-0" viewBox="0 0 9 17" fill="#a3a3a3"><path d="M4.500 7 8.500 11h-8z" /></svg>
      <div className="w-[13px] basis-[284px] bg-[#c1c1c1]" />
      <svg className="mt-auto h-[17px] w-[9px] shrink-0" viewBox="0 0 9 17" fill="#505050"><path d="M.5 6h8l-4 4z" /></svg>
    </div>
  );
}

export default function App() {
  return (
    <div className="flex h-screen flex-col overflow-hidden bg-black font-['Open_Sans',sans-serif]">
      <div className="shrink-0 font-['Roboto',sans-serif]">
        <TabStrip />
        <Toolbar />
        <Bookmarks />
      </div>
      <div className="mb-[2px] flex min-h-0 flex-1 overflow-hidden">
        <Sidebar />
        <Page />
        <ScrollRail />
      </div>
    </div>
  );
}
